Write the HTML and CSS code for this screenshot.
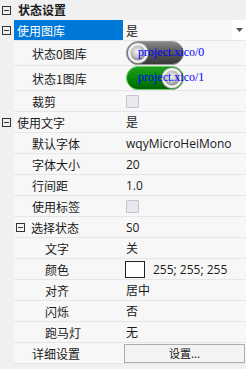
FILE: index.html
```html
<!DOCTYPE html>
<html lang="zh">
<head>
<meta charset="utf-8">
<link rel="stylesheet" href="styles.css">
</head>
<body>
<div class="browser">
  <div class="row header">
    <div class="gutter"><svg class="tog" width="9" height="9" viewBox="0 0 9 9"><rect x="0.5" y="0.5" width="8" height="8" fill="none" stroke="#333"/><line x1="2" y1="4.5" x2="7" y2="4.5" stroke="#333"/></svg></div>
    <div class="htext">状态设置</div>
  </div>

  <div class="row">
    <div class="gutter"><svg class="tog" width="9" height="9" viewBox="0 0 9 9"><rect x="0.5" y="0.5" width="8" height="8" fill="none" stroke="#333"/><line x1="2" y1="4.5" x2="7" y2="4.5" stroke="#333"/></svg></div>
    <div class="cells">
      <div class="name l0 selected">使用图库</div>
      <div class="value combo"><span class="cv">是</span><span class="drop"><svg width="7" height="4" viewBox="0 0 7 4"><path d="M0 0H7L3.5 4Z" fill="#555"/></svg></span></div>
    </div>
  </div>

  <div class="row tall">
    <div class="gutter"></div>
    <div class="cells">
      <div class="name l1">状态0图库</div>
      <div class="value img">
        <svg class="sw" width="58" height="24" viewBox="0 0 58 24">
          <defs>
            <linearGradient id="offg" x1="0" y1="0" x2="0" y2="1"><stop offset="0" stop-color="#8a8a8a"/><stop offset="0.5" stop-color="#555"/><stop offset="1" stop-color="#3a3a3a"/></linearGradient>
            <radialGradient id="knob" cx="0.45" cy="0.4" r="0.6"><stop offset="0" stop-color="#f4f4f4"/><stop offset="0.55" stop-color="#c8c8c8"/><stop offset="1" stop-color="#8c8c8c"/></radialGradient>
            <linearGradient id="ong" x1="0" y1="0" x2="0" y2="1"><stop offset="0" stop-color="#20a020"/><stop offset="0.5" stop-color="#088a08"/><stop offset="1" stop-color="#006000"/></linearGradient>
          </defs>
          <rect x="0.5" y="0.5" width="57" height="23" rx="11.5" fill="url(#offg)" stroke="#9a9a9a"/>
          <circle cx="12" cy="12" r="10.5" fill="#f2f2f2" stroke="#777" stroke-width="0.8"/>
          <circle cx="12" cy="12" r="7.5" fill="url(#knob)"/>
        </svg>
        <span class="imgtext">project.xico/0</span>
      </div>
    </div>
  </div>

  <div class="row tall2">
    <div class="gutter"></div>
    <div class="cells">
      <div class="name l1">状态1图库</div>
      <div class="value img">
        <svg class="sw" width="58" height="24" viewBox="0 0 58 24">
          <rect x="0.5" y="0.5" width="57" height="23" rx="11.5" fill="url(#ong)" stroke="#66d066"/>
          <circle cx="46" cy="12" r="10.5" fill="#f2f2f2" stroke="#777" stroke-width="0.8"/>
          <circle cx="46" cy="12" r="7.5" fill="url(#knob)"/>
        </svg>
        <span class="imgtext">project.xico/1</span>
      </div>
    </div>
  </div>

  <div class="row">
    <div class="gutter"></div>
    <div class="cells">
      <div class="name l1">裁剪</div>
      <div class="value"><span class="check"></span></div>
    </div>
  </div>

  <div class="row">
    <div class="gutter"><svg class="tog" width="9" height="9" viewBox="0 0 9 9"><rect x="0.5" y="0.5" width="8" height="8" fill="none" stroke="#333"/><line x1="2" y1="4.5" x2="7" y2="4.5" stroke="#333"/></svg></div>
    <div class="cells">
      <div class="name l0">使用文字</div>
      <div class="value">是</div>
    </div>
  </div>

  <div class="row"><div class="gutter"></div><div class="cells"><div class="name l1">默认字体</div><div class="value">wqyMicroHeiMono</div></div></div>
  <div class="row"><div class="gutter"></div><div class="cells"><div class="name l1">字体大小</div><div class="value">20</div></div></div>
  <div class="row"><div class="gutter"></div><div class="cells"><div class="name l1">行间距</div><div class="value">1.0</div></div></div>
  <div class="row"><div class="gutter"></div><div class="cells"><div class="name l1">使用标签</div><div class="value"><span class="check"></span></div></div></div>

  <div class="row">
    <div class="gutter"></div>
    <div class="cells">
      <div class="name l1x"><svg class="tog" width="9" height="9" viewBox="0 0 9 9"><rect x="0.5" y="0.5" width="8" height="8" fill="none" stroke="#333"/><line x1="2" y1="4.5" x2="7" y2="4.5" stroke="#333"/></svg><span>选择状态</span></div>
      <div class="value">S0</div>
    </div>
  </div>

  <div class="row"><div class="gutter"></div><div class="cells"><div class="name l2">文字</div><div class="value">关</div></div></div>
  <div class="row"><div class="gutter"></div><div class="cells"><div class="name l2">颜色</div><div class="value"><span class="swatch"></span><span>255; 255; 255</span></div></div></div>
  <div class="row"><div class="gutter"></div><div class="cells"><div class="name l2">对齐</div><div class="value">居中</div></div></div>
  <div class="row"><div class="gutter"></div><div class="cells"><div class="name l2">闪烁</div><div class="value">否</div></div></div>
  <div class="row"><div class="gutter"></div><div class="cells"><div class="name l2">跑马灯</div><div class="value">无</div></div></div>
  <div class="row"><div class="gutter"></div><div class="cells"><div class="name l1">详细设置</div><div class="value btncell"><button class="btn">设置...</button></div></div></div>
</div>
</body>
</html>
```

FILE: styles.css
```css
html, body {
  margin: 0;
  padding: 0;
  background: #f0f0f0;
}
body {
  width: 246px;
  height: 369px;
  overflow: hidden;
  font-family: "Open Sans", "Noto Sans CJK SC", sans-serif;
  font-size: 12px;
  color: #1a1a1a;
}
.browser {
  display: flex;
  flex-direction: column;
}
.row {
  display: flex;
  height: 21px;
}
.row.tall { height: 25px; }
.row.tall2 { height: 25px; }
.row.header { height: 20px; align-items: center; }
.gutter {
  width: 14px;
  flex: none;
  display: flex;
  align-items: center;
  padding-left: 2px;
  box-sizing: border-box;
}
.tog { display: block; flex: none; }
.htext {
  font-weight: bold;
  padding-left: 4px;
  font-family: "Noto Sans CJK SC", sans-serif;
  font-size: 12px;
  line-height: 20px;
}
.cells {
  flex: 1;
  display: flex;
  background: #f7f7f7;
  border-bottom: 1px solid #e6e6e6;
}
.name {
  width: 109px;
  flex: none;
  box-sizing: border-box;
  display: flex;
  align-items: center;
  font-family: "Noto Sans CJK SC", sans-serif;
  white-space: nowrap;
}
.name.l0 { padding-left: 3px; }
.name.l1 { padding-left: 18px; }
.name.l1x { padding-left: 2px; gap: 6px; }
.name.l2 { padding-left: 31px; }
.name.selected {
  background: #0078d7;
  color: #fff;
}
.value {
  flex: 1;
  display: flex;
  align-items: center;
  padding-left: 3px;
  white-space: nowrap;
  min-width: 0;
}
.combo { padding-right: 0; }
.cv { flex: 1; font-family: "Noto Sans CJK SC", sans-serif; }
.drop {
  width: 14px;
  align-self: stretch;
  background: #fff;
  display: flex;
  align-items: center;
  justify-content: center;
}
.img {
  position: relative;
  padding-left: 3px;
}
.sw { display: block; }
.imgtext {
  position: absolute;
  left: 15px;
  top: 4px;
  font-family: "Liberation Serif", serif;
  font-size: 12px;
  color: #0000ff;
}
.check {
  width: 11px;
  height: 11px;
  border: 1px solid #c4c4d0;
  background: #e8e8ef;
  border-radius: 1px;
}
.swatch {
  width: 18px;
  height: 15px;
  border: 1px solid #222;
  background: #fff;
  margin-right: 8px;
  margin-left: -1px;
}
.btncell { padding-left: 1px; padding-right: 1px; }
.btn {
  width: 100%;
  height: 19px;
  margin: 0;
  border: 1px solid #adadad;
  background: #f3f3f3;
  font-family: "Noto Sans CJK SC", sans-serif;
  font-size: 11px;
  color: #111;
  padding: 0;
  display: flex;
  align-items: center;
  justify-content: center;
}
```
